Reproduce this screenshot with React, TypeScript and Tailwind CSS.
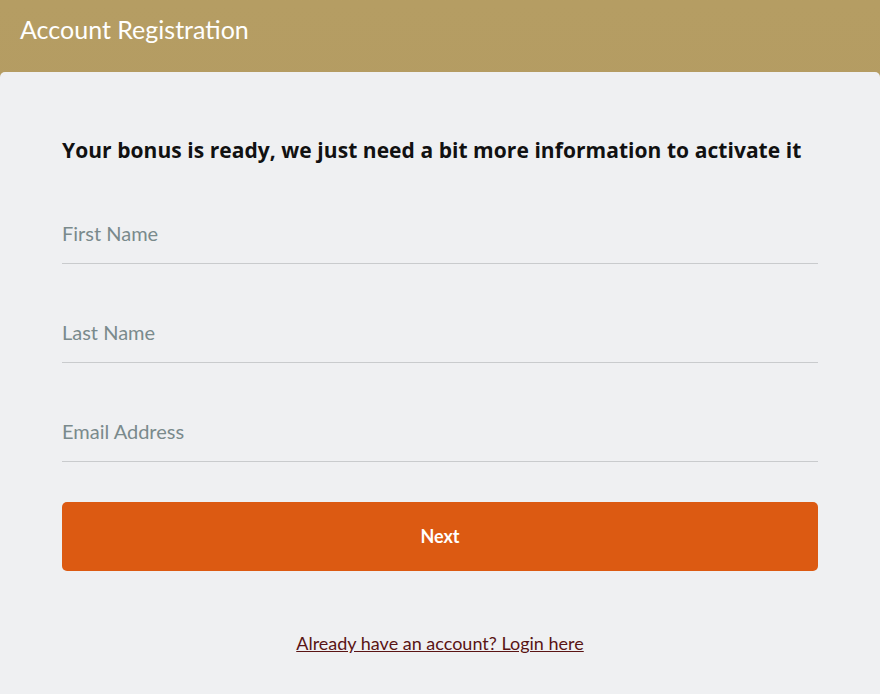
export default function App() {
  const fields = ["First Name", "Last Name", "Email Address"];

  return (
    <div className="min-h-[694px] w-[880px] bg-gradient-to-b from-[#b59d63] to-[#b0965f] font-['Lato','Liberation_Sans',sans-serif]">
      {/* header */}
      <div className="flex h-[72px] items-center px-5 pb-[14px]">
        <h1 className="text-[25px] font-normal leading-none text-white">Account Registration</h1>
      </div>

      {/* panel */}
      <div className="min-h-[622px] rounded-t-[5px] bg-[#eff0f2] px-[62px] pt-[62px]">
        <h2 className="font-['Open_Sans','Liberation_Sans',sans-serif] text-[21px] font-bold leading-[32px] tracking-[0.05px] text-[#111111]">
          Your bonus is ready, we just need a bit more information to activate it
        </h2>

        <div className="flex flex-col">
          {fields.map((f, i) => (
            <div key={f} className={`flex items-end ${i === 0 ? "h-[98px]" : "h-[99px]"}`}>
              <input
                placeholder={f}
                className="h-[50px] w-full border-b border-[#c9cbcd] bg-transparent pb-[11px] text-[20px] text-[#333] outline-none placeholder:text-[#7a8a8c]"
              />
            </div>
          ))}
        </div>

        <button className="mt-[40px] h-[69px] w-full rounded-[5px] bg-[#dc5a12] text-[18px] font-bold text-white">
          Next
        </button>

        <div className="mt-[59px] text-center">
          <a href="#" className="text-[18px] text-[#5a1414] underline">
            Already have an account? Login here
          </a>
        </div>
      </div>
    </div>
  );
}
